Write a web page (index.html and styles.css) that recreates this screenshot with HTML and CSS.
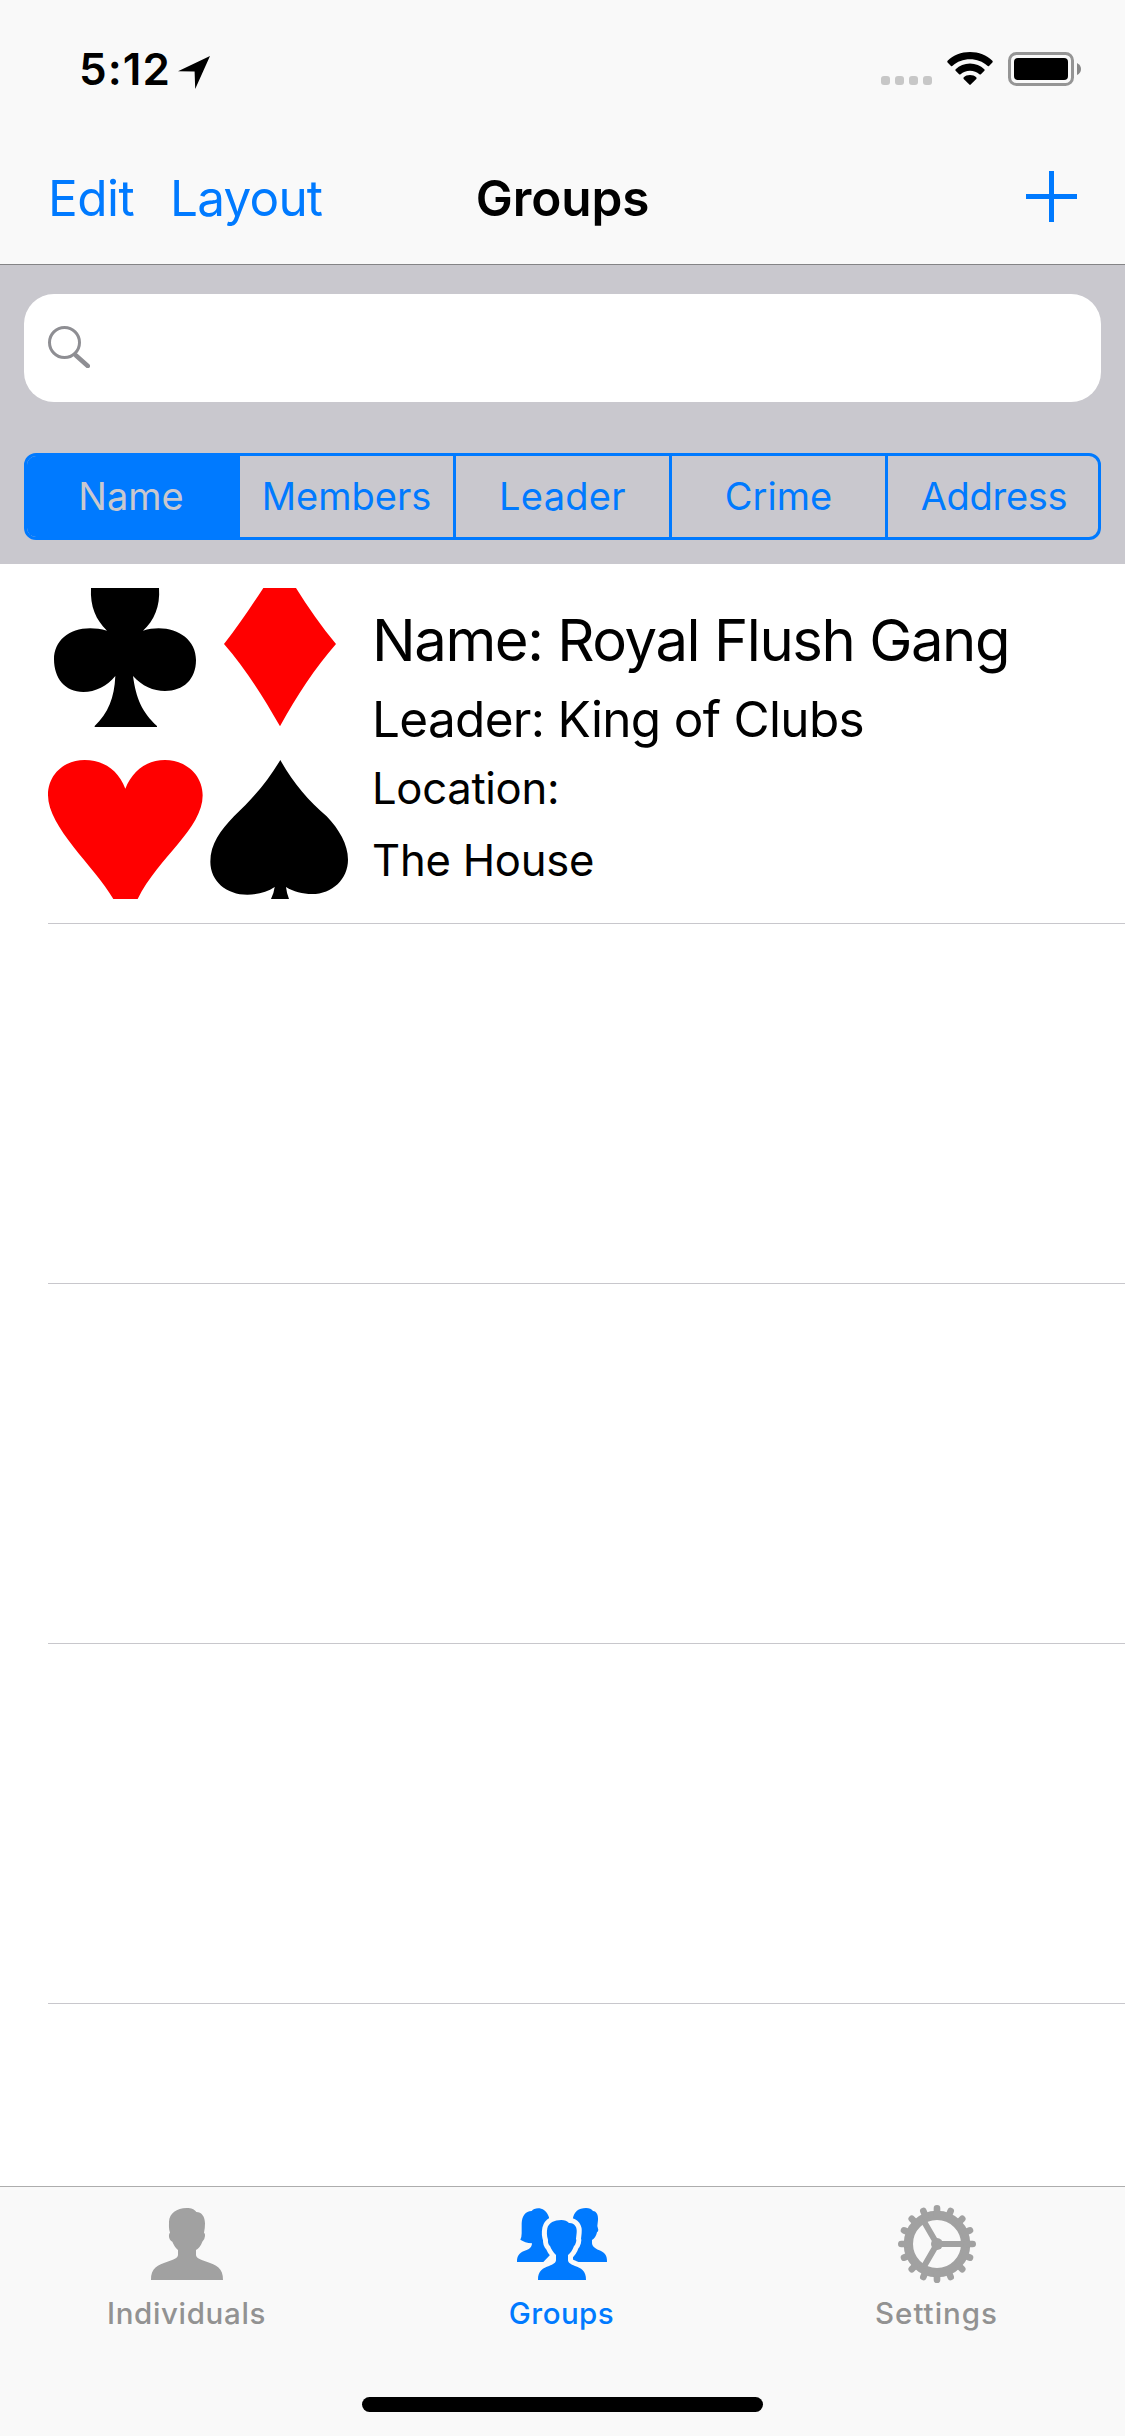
FILE: index.html
```html
<!DOCTYPE html>
<html lang="en">
<head>
<meta charset="utf-8">
<title>Groups</title>
<link rel="stylesheet" href="styles.css">
</head>
<body>
<div class="screen">
  <header class="top">
    <div class="status">
      <div class="status-left">
        <span class="time">5:12</span>
        <svg class="arrow" viewBox="0 0 32 33"><path d="M32 0 17.2 33 16.6 15.6 0 15.2Z"/></svg>
      </div>
      <div class="status-right">
        <svg class="dots" viewBox="0 0 51 9"><rect width="9" height="9" rx="3"/><rect x="14" width="9" height="9" rx="3"/><rect x="28" width="9" height="9" rx="3"/><rect x="42" width="9" height="9" rx="3"/></svg>
        <svg class="wifi" viewBox="0 0 46 34"><path d="M23 0C31.800 0 39.700 3.300 45.400 8.800Q46.100 9.600 45.400 10.400L42 13.900Q41.200 14.500 40.400 13.800C35.700 9.600 29.700 7.300 23 7.300S10.300 9.600 5.600 13.800Q4.800 14.500 4 13.900L.6 10.400Q-.1 9.600.6 8.800C6.300 3.300 14.200 0 23 0Z"/><path d="M23 11.600C28.600 11.600 33.500 13.700 37.300 17.200Q38.100 18 37.400 18.700L33.900 22.200Q33.200 22.800 32.400 22.200C29.900 20 26.700 18.700 23 18.700S16.100 20 13.600 22.200Q12.800 22.800 12.100 22.200L8.600 18.700Q7.900 18 8.700 17.200C12.500 13.700 17.400 11.600 23 11.600Z"/><path d="M23 23C25.600 23 27.600 23.900 29.200 25.300Q30 26.100 29.300 26.900L23.700 32.600Q23 33.300 22.300 32.600L16.700 26.900Q16 26.100 16.800 25.300C18.400 23.900 20.400 23 23 23Z"/></svg>
        <svg class="battery" viewBox="0 0 73 34"><rect class="shell" x="1.500" y="1.500" width="63" height="31" rx="7"/><rect x="6" y="6" width="54" height="22" rx="4"/><path class="nub" d="M69 11Q73 13 73 17T69 23Z"/></svg>
      </div>
    </div>
    <nav class="nav">
      <div class="nav-left"><a class="edit">Edit</a><a class="layout">Layout</a></div>
      <h1 class="title">Groups</h1>
      <div class="nav-right"><svg class="plus" viewBox="0 0 51 51"><path d="M23 0h5v51h-5zM0 23h51v5H0z"/></svg></div>
    </nav>
  </header>

  <section class="filter">
    <div class="search">
      <svg class="glass" viewBox="0 0 42 42"><circle cx="16.500" cy="16.500" r="15"/><path d="M28 29.500 39.800 40"/></svg>
    </div>
    <div class="scopes">
      <span class="scope on">Name</span>
      <span class="scope">Members</span>
      <span class="scope leader">Leader</span>
      <span class="scope">Crime</span>
      <span class="scope address">Address</span>
    </div>
  </section>

  <main class="list">
    <article class="row">
      <svg class="suits" viewBox="54 54 900 936">
        <path d="M183 54H387C391 110 372 152 339 182C420 158 498 198 498 270C498 328 460 363 405 363C370 363 336 348 309 318C318 385 336 427 381 468V471H194V468C235 428 253 385 256 318C232 348 196 366 160 366C105 366 72 325 72 268C72 200 140 157 231 182C198 150 180 110 183 54Z"/>
        <path class="red" d="M700 54H798C834 112 875 170 918 222C855 294 800 378 750 469C698 378 642 290 582 222C623 170 658 118 700 54Z"/>
        <path class="red" d="M250 987C192 888 54 772 54 676C54 612 104 570 164 570C220 570 265 600 286 656C306 605 348 570 405 570C466 570 518 614 518 676C518 776 386 862 323 987Z"/>
        <path d="M751 570C787 636 836 693 890 739C927 778 954 823 954 869C954 927 907 972 846 972C818 972 790 965 768 951Q770 970 777 987H723Q732 968 734 951C712 966 684 974 652 974C590 974 541 934 541 875C541 823 572 780 612 739C668 686 712 635 751 570Z"/>
      </svg>
      <div class="info">
        <p class="name">Name: Royal Flush Gang</p>
        <p class="boss">Leader: King of Clubs</p>
        <p class="loc">Location:</p>
        <p class="place">The House</p>
      </div>
    </article>
    <div class="row"></div>
    <div class="row"></div>
    <div class="row"></div>
  </main>

  <footer class="tabs">
    <div class="tabbar">
      <div class="tab">
        <svg class="icon" viewBox="255 96 252 252"><path d="M273 330C272 294 294 284 322 275C340 269 354 264 354 254V240C346 232 341 225 337 215C331 213 326 204 327 195Q328 189 330 188C326 175 327 165 327 155C328 130 350 114 380 114C395 114 403 118 409 126C425 126 435 140 435 160Q435 175 432 188Q436 191 435 198Q434 210 427 215C422 228 416 236 408 240V254C408 264 422 269 440 275C468 284 490 294 489 330Z"/></svg>
        <span class="label">Individuals</span>
      </div>
      <div class="tab active">
        <svg class="icon group" viewBox="102 96 288 252">
          <path d="M111 276C110 252 124 246 140 240C150 236 155 232 156 220Q134 218 121 209Q125 203 125 190V160C126 138 136 124 155 123C165 111 196 109 207 142L215 250L190 276Z"/>
          <path d="M278 276V150C281 125 296 114 318 114Q333 114 339 123C350 124 355 135 354 150L352 168L355 180Q354 186 351 187C349 198 343 206 336 210V220C337 230 346 236 356 240C372 246 382 254 381 276Z"/>
          <path class="front" d="M174 330C173 302 190 294 207 288C220 283 228 278 228 270V255C220 247 214 238 210 228Q203 222 204 209C200 198 200 185 202 175C206 158 223 150 244 150C254 150 262 153 267 159C284 158 292 172 290 188L288 206Q290 210 288 217Q286 225 282 228C278 240 272 249 264 255V270C264 278 272 283 285 288C302 294 319 302 318 330Z"/>
        </svg>
        <span class="label groups">Groups</span>
      </div>
      <div class="tab">
        <svg class="icon" viewBox="-126 -126 252 252">
          <g class="gear">
            <circle r="86"/>
            <path class="tooth" d="M-107 0h18M89 0h18M0-107v18M0 89v18"/>
            <path class="tooth" transform="rotate(22.500)" d="M-107 0h18M89 0h18M0-107v18M0 89v18"/>
            <path class="tooth" transform="rotate(45)" d="M-107 0h18M89 0h18M0-107v18M0 89v18"/>
            <path class="tooth" transform="rotate(67.500)" d="M-107 0h18M89 0h18M0-107v18M0 89v18"/>
            <path d="M0 0H80M0 0-40-69.300M0 0-40 69.300"/>
          </g>
          <circle r="18"/>
        </svg>
        <span class="label settings">Settings</span>
      </div>
    </div>
    <div class="home"></div>
  </footer>
</div>
</body>
</html>
```
FILE: styles.css
```css
* { box-sizing: border-box; margin: 0; padding: 0; }
body { background: #fff; font-family: Inter, "Liberation Sans", sans-serif; color: #000; }
svg { display: block; flex: none; }
.screen { width: 1125px; height: 2436px; display: flex; flex-direction: column; overflow: hidden; }

.top { height: 265px; background: #f9f9f9; border-bottom: 1px solid #848486; }
.status { height: 138px; display: flex; justify-content: space-between; padding: 0 44px 0 79px; }
.status-left { display: flex; align-items: center; }
.time { font-size: 44px; font-weight: 600; letter-spacing: 1.06px; line-height: 138px; }
.arrow { width: 32px; height: 33px; margin: 6px 0 0 7px; }
.status-right { display: flex; align-items: center; }
.dots { width: 51px; height: 9px; margin: 23px 15px 0 0; fill: #c7c7c7; }
.wifi { width: 46px; height: 34px; margin-right: 15px; }
.battery { width: 73px; height: 34px; }
.shell { fill: none; stroke: #959595; stroke-width: 3; }
.nub { fill: #888; }

.nav { height: 120px; display: grid; grid-template-columns: 1fr auto 1fr; align-items: center; padding: 0 48px; font-size: 49.5px; line-height: 120px; }
.nav-left { display: flex; color: #007aff; }
.edit { width: 122px; letter-spacing: -.5px; }
.layout { letter-spacing: -.8px; }
.title { font-size: 49.5px; font-weight: 600; letter-spacing: -.1px; }
.nav-right { display: flex; justify-content: flex-end; }
.plus { width: 51px; height: 51px; margin-bottom: 3px; fill: #007aff; }

.filter { height: 299px; background: #c9c8ce; padding: 29px 24px 24px; display: flex; flex-direction: column; justify-content: space-between; }
.search { height: 108px; border-radius: 30px; background: #fff; padding: 32px 24px; }
.glass { width: 42px; height: 42px; fill: none; stroke: #8e8e93; stroke-width: 3; stroke-linecap: round; }
.glass path { stroke-width: 4.500; }
.scopes { height: 87px; border: 3px solid #007aff; border-radius: 12px; display: grid; grid-template-columns: 210px 216px 216px 216px 1fr; overflow: hidden; }
.scope { font-size: 38px; line-height: 81px; text-align: center; color: #007aff; border-left: 3px solid #007aff; }
.scope.on { background: #007aff; color: #c9c8ce; border-left: 0; padding-right: 2px; }
.leader { letter-spacing: .3px; }
.address { letter-spacing: -.3px; padding-left: 2px; }

.list { flex: 1; padding-left: 48px; overflow: hidden; }
.row { height: 360px; border-bottom: 1px solid #c8c7cc; display: flex; }
.suits { width: 300px; height: 312px; margin-top: 24px; }
.red { fill: #f00; }
.info { padding: 36px 0 0 24px; white-space: nowrap; }
.name { font-size: 58px; line-height: 80px; letter-spacing: -1.44px; }
.boss { font-size: 49.5px; line-height: 78px; letter-spacing: -.69px; }
.loc { font-size: 43.6px; line-height: 61px; letter-spacing: -.3px; }
.place { font-size: 43.6px; line-height: 84px; letter-spacing: -.24px; }

.tabs { height: 250px; background: #f9f9f9; border-top: 1px solid #adadad; display: flex; flex-direction: column; align-items: center; }
.tabbar { width: 1125px; height: 210px; display: flex; margin-right: 2px; }
.tab { flex: 1; display: flex; flex-direction: column; align-items: center; padding-top: 15px; color: #929292; fill: #a1a1a1; }
.tab.active { color: #007aff; fill: #007aff; }
.icon { width: 84px; height: 84px; }
.icon.group { width: 96px; }
.front { stroke: #f9f9f9; stroke-width: 30; paint-order: stroke; }
.gear circle { fill: none; stroke: #a1a1a1; stroke-width: 28; }
.gear path { fill: none; stroke: #a1a1a1; stroke-width: 18; }
.gear .tooth { stroke-width: 20; stroke-linecap: round; }
.label { margin-top: 9px; font-size: 29.5px; font-weight: 500; line-height: 36px; letter-spacing: .65px; }
.groups { letter-spacing: .46px; }
.settings { letter-spacing: .99px; }
.home { width: 401px; height: 15px; border-radius: 8px; background: #000; }
```
